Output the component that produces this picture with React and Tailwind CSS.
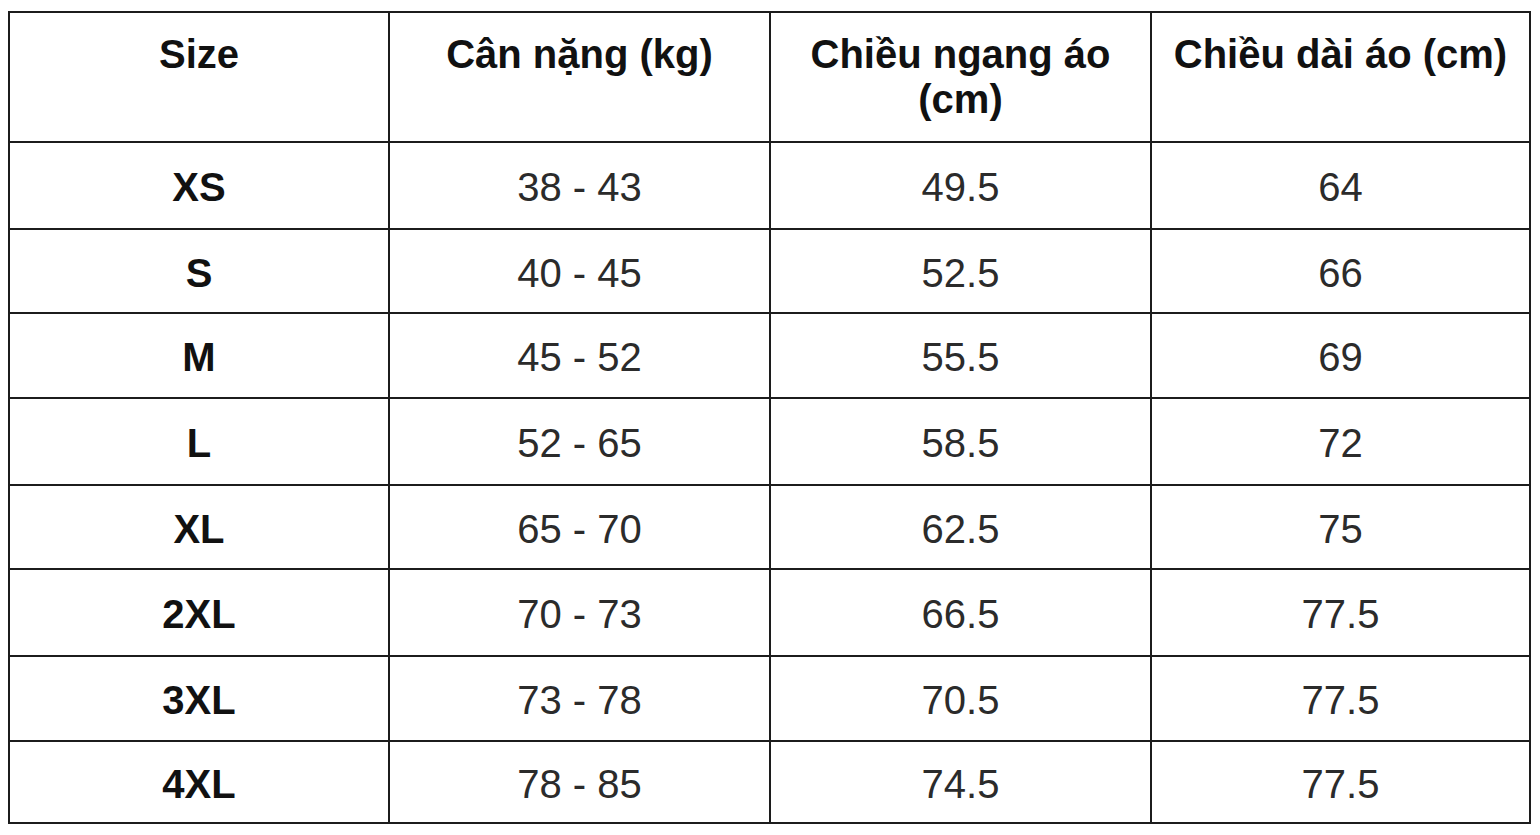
export default function App() {
  const headers = ["Size", "Cân nặng (kg)", "Chiều ngang áo (cm)", "Chiều dài áo (cm)"];
  const rows = [
    ["XS", "38 - 43", "49.5", "64"],
    ["S", "40 - 45", "52.5", "66"],
    ["M", "45 - 52", "55.5", "69"],
    ["L", "52 - 65", "58.5", "72"],
    ["XL", "65 - 70", "62.5", "75"],
    ["2XL", "70 - 73", "66.5", "77.5"],
    ["3XL", "73 - 78", "70.5", "77.5"],
    ["4XL", "78 - 85", "74.5", "77.5"],
  ];
  return (
    <div
      className="w-[1540px] h-[835px] bg-white pt-[11px] pl-[8px]"
      style={{ fontFamily: '"Liberation Sans", Arial, sans-serif' }}
    >
      <div className="grid w-[1523px] grid-cols-[380px_381px_381px_379px] grid-rows-[130px_87px_84px_85px_87px_84px_87px_85px_82px] border-l-2 border-t-2 border-[#1c1c1c]">
        {headers.map((h, i) => (
          <div
            key={"h" + i}
            className="border-r-2 border-b-2 border-[#1c1c1c] px-2 pt-[19px] text-center text-[40px] leading-[45px] font-bold text-[#111]"
          >
            {h}
          </div>
        ))}
        {rows.map((r, ri) =>
          r.map((c, ci) => (
            <div
              key={ri + "-" + ci}
              className={
                "flex items-center justify-center border-r-2 border-b-2 border-[#1c1c1c] pt-[3px] text-[40px] leading-none " +
                (ci === 0 ? "font-bold text-[#111]" : "text-[#2b2b2b]")
              }
            >
              {c}
            </div>
          ))
        )}
      </div>
    </div>
  );
}
